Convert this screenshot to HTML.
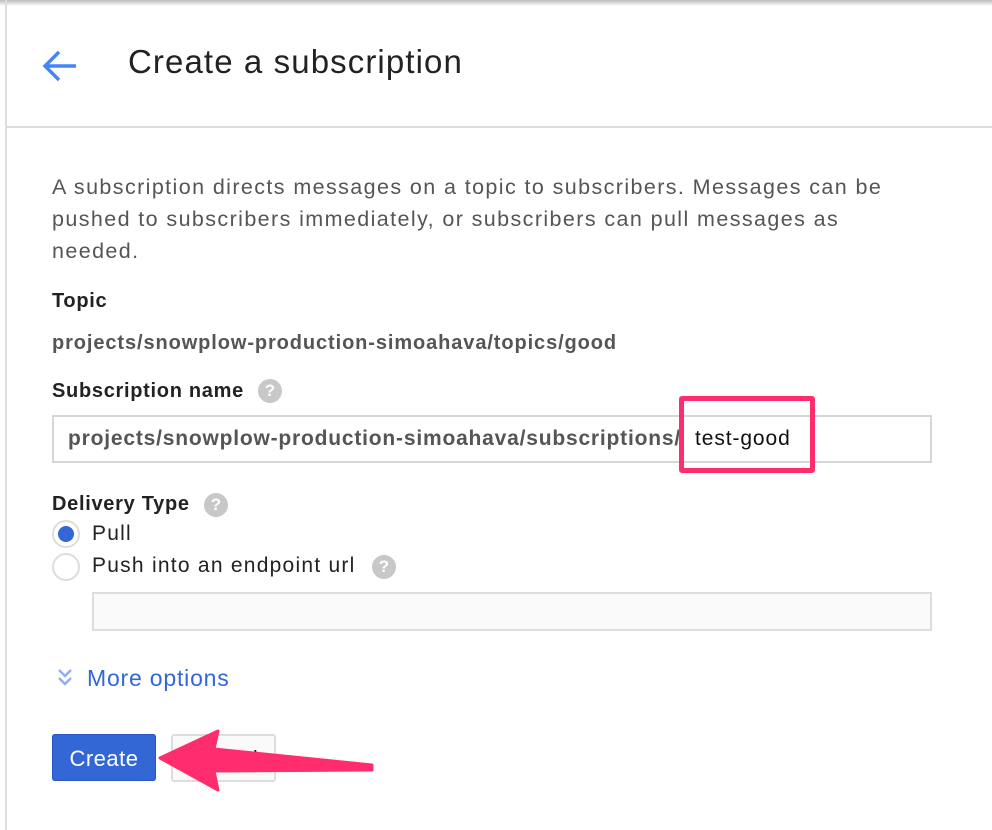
<!DOCTYPE html>
<html><head><style>
body{margin:0;width:992px;height:830px;background:#fff;font-family:"Liberation Sans",sans-serif;position:relative;overflow:hidden}
.a{position:absolute;white-space:nowrap}
.q{position:absolute;width:24px;height:24px;border-radius:50%;background:#c8c8c8;color:#fff;font-size:17px;font-weight:bold;text-align:center;line-height:24px}
.lab{font-size:20px;font-weight:bold;color:#222;letter-spacing:0.7px}
</style></head><body>
<div style="position:absolute;left:0;top:0;width:992px;height:6px;background:linear-gradient(#bbb,#fff)"></div>
<div style="position:absolute;left:5px;top:0;width:2px;height:830px;background:#ddd"></div>
<div style="position:absolute;left:7px;top:126px;width:985px;height:2px;background:#ddd"></div>
<svg class="a" style="left:40px;top:48px" width="40" height="36" viewBox="0 0 40 36"><path d="M36 18H6M19 4L5 18l14 14" fill="none" stroke="#4285f4" stroke-width="3.4"/></svg>
<div class="a" style="left:128px;top:43px;font-size:33px;color:#222;letter-spacing:1.1px">Create a subscription</div>
<div class="a" style="left:52px;top:171px;font-size:21.5px;line-height:32px;color:#555;letter-spacing:1.4px">A subscription directs messages on a topic to subscribers. Messages can be<br>pushed to subscribers immediately, or subscribers can pull messages as<br>needed.</div>
<div class="a lab" style="left:52px;top:290px">Topic</div>
<div class="a" style="left:52px;top:332px;font-size:20px;color:#555;font-weight:bold;letter-spacing:0.9px">projects/snowplow-production-simoahava/topics/good</div>
<div class="a lab" style="left:52px;top:380px">Subscription name</div>
<div class="q" style="left:258px;top:379px">?</div>
<div style="position:absolute;left:52px;top:415px;width:876px;height:44px;border:2px solid #d6d6d6"></div>
<div class="a" style="left:68px;top:427px;font-size:21px;color:#555;font-weight:bold;letter-spacing:0.8px">projects/snowplow-production-simoahava/subscriptions/</div>
<div class="a" style="left:695px;top:427px;font-size:21px;color:#111;letter-spacing:0.9px">test-good</div>
<div style="position:absolute;left:679px;top:396px;width:126px;height:67px;border:5px solid #ff2d6e;border-radius:3px"></div>
<div class="a lab" style="left:52px;top:493px">Delivery Type</div>
<div class="q" style="left:204px;top:493px">?</div>
<div style="position:absolute;left:52px;top:520px;width:24px;height:24px;border:2px solid #ddd;border-radius:50%"></div>
<div style="position:absolute;left:58px;top:526px;width:16px;height:16px;background:#3367d6;border-radius:50%"></div>
<div class="a" style="left:92px;top:522px;font-size:21px;color:#222;letter-spacing:1.2px">Pull</div>
<div style="position:absolute;left:52px;top:553px;width:24px;height:24px;border:2px solid #ddd;border-radius:50%"></div>
<div class="a" style="left:92px;top:554px;font-size:21px;color:#222;letter-spacing:1.25px">Push into an endpoint url</div>
<div class="q" style="left:372px;top:555px">?</div>
<div style="position:absolute;left:92px;top:592px;width:836px;height:35px;border:2px solid #ddd;background:#fafafa"></div>
<svg class="a" style="left:56px;top:667px" width="18" height="22" viewBox="0 0 18 22"><path d="M3 3l6 6 6-6M3 11l6 6 6-6" fill="none" stroke="#8fb0ea" stroke-width="2.4"/></svg>
<div class="a" style="left:87px;top:665px;font-size:23px;color:#3367d6;letter-spacing:0.8px">More options</div>
<div style="position:absolute;left:52px;top:734px;width:104px;height:47px;background:#3367d6;border-radius:3px;box-shadow:inset 0 0 0 1px #2a56c6;color:#fff;font-size:22px;text-align:center;line-height:49px;letter-spacing:0.5px">Create</div>
<div style="position:absolute;left:171px;top:734px;width:101px;height:44px;border:2px solid #ddd;border-radius:3px;background:#fafafa;color:#222;font-size:22px;text-align:center;line-height:46px">Cancel</div>
<svg class="a" style="left:0;top:0" width="992" height="830"><path d="M160 758L218 731L214 749L372 765L372 770L214 771L218 790Z" fill="#ff2d6e" stroke="#ff2d6e" stroke-width="3" stroke-linejoin="round"/></svg>
</body></html>
